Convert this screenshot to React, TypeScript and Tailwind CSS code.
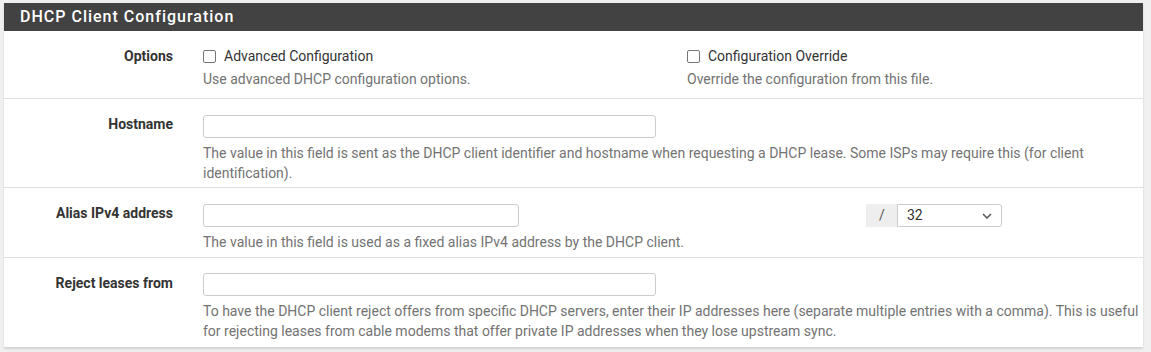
export default function App() {
  return (
    <div className="w-[1151px] h-[352px] bg-[#f0f0f0] pt-[3px] pl-[4px] font-['Roboto',sans-serif] text-[14px] text-[#333]">
      <div className="w-[1139px] bg-white shadow-[0_2px_2px_rgba(0,0,0,0.12)]">
        <div className="h-[28px] bg-[#424242] flex items-center pl-[16px]">
          <h2 className="text-white text-[16px] font-medium tracking-[1px] leading-none">DHCP Client Configuration</h2>
        </div>

        {/* Options */}
        <div className="flex border-b border-[#e0e0e0] pt-[15px] pb-[9px]">
          <div className="w-[199px] shrink-0 pr-[30px] text-right font-bold leading-[20px]">Options</div>
          <div className="flex">
            <div className="w-[484px]">
              <label className="flex items-center gap-[8px] leading-[20px]">
                <span className="w-[13px] h-[13px] border border-[#767676] rounded-[2px] bg-white"></span>
                <span>Advanced Configuration</span>
              </label>
              <p className="mt-[3px] leading-[20px] text-[#737373]">Use advanced DHCP configuration options.</p>
            </div>
            <div>
              <label className="flex items-center gap-[8px] leading-[20px]">
                <span className="w-[13px] h-[13px] border border-[#767676] rounded-[2px] bg-white"></span>
                <span>Configuration Override</span>
              </label>
              <p className="mt-[3px] leading-[20px] text-[#737373]">Override the configuration from this file.</p>
            </div>
          </div>
        </div>

        {/* Hostname */}
        <div className="flex border-b border-[#e0e0e0] pt-[15px] pb-[4px]">
          <div className="w-[199px] shrink-0 pr-[30px] text-right font-bold leading-[20px]">Hostname</div>
          <div className="w-[938px] pt-[1px]">
            <input type="text" className="block w-[453px] h-[23px] border border-[#ccc] rounded-[3px] px-2 outline-none" />
            <p className="mt-[5px] leading-[20px] text-[#737373]">
              The value in this field is sent as the DHCP client identifier and hostname when requesting a DHCP lease. Some ISPs may require this (for client identification).
            </p>
          </div>
        </div>

        {/* Alias */}
        <div className="flex border-b border-[#e0e0e0] pt-[15px] pb-[5px]">
          <div className="w-[199px] shrink-0 pr-[30px] text-right font-bold leading-[20px]">Alias IPv4 address</div>
          <div className="w-[938px] pt-[1px]">
            <div className="flex">
              <div className="w-[663px]">
                <input type="text" className="block w-[316px] h-[23px] border border-[#ccc] rounded-[3px] px-2 outline-none" />
              </div>
              <div className="flex h-[23px]">
                <span className="w-[31px] flex items-center justify-center bg-[#eee] text-[#555] border-y border-l border-[#eee]">/</span>
                <div className="w-[105px] flex items-center justify-between border border-[#ccc] rounded-r-[3px] pl-[9px] pr-[9px] text-[#333]">
                  <span>32</span>
                  <svg width="10" height="6" viewBox="0 0 10 6" fill="none" stroke="#555" strokeWidth="1.5"><path d="M1 1l4 4 4-4" /></svg>
                </div>
              </div>
            </div>
            <p className="mt-[5px] leading-[20px] text-[#737373]">The value in this field is used as a fixed alias IPv4 address by the DHCP client.</p>
          </div>
        </div>

        {/* Reject */}
        <div className="flex pt-[15px] pb-[6px]">
          <div className="w-[199px] shrink-0 pr-[30px] text-right font-bold leading-[20px]">Reject leases from</div>
          <div className="w-[938px]">
            <input type="text" className="block w-[453px] h-[23px] border border-[#ccc] rounded-[3px] px-2 outline-none" />
            <p className="mt-[5px] leading-[20px] text-[#737373]">
              To have the DHCP client reject offers from specific DHCP servers, enter their IP addresses here (separate multiple entries with a comma). This is useful for rejecting leases from cable modems that offer private IP addresses when they lose upstream sync.
            </p>
          </div>
        </div>
      </div>
    </div>
  );
}
